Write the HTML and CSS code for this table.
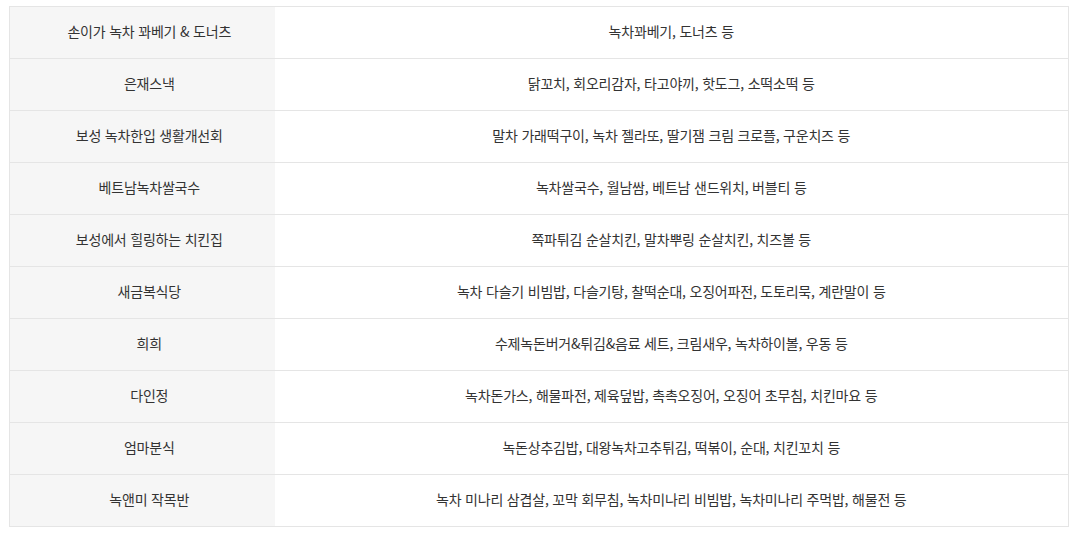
FILE: index.html
```html
<!DOCTYPE html>
<html lang="ko">
<head>
<meta charset="utf-8">
<link rel="stylesheet" href="styles.css">
</head>
<body>
<table class="menu-table">
  <colgroup><col class="col-name"><col class="col-menu"></colgroup>
  <tbody>
    <tr><th>손이가 녹차 꽈베기 &amp; 도너츠</th><td>녹차꽈베기, 도너츠 등</td></tr>
    <tr><th>은재스낵</th><td>닭꼬치, 회오리감자, 타고야끼, 핫도그, 소떡소떡 등</td></tr>
    <tr><th>보성 녹차한입 생활개선회</th><td>말차 가래떡구이, 녹차 젤라또, 딸기잼 크림 크로플, 구운치즈 등</td></tr>
    <tr><th>베트남녹차쌀국수</th><td>녹차쌀국수, 월남쌈, 베트남 샌드위치, 버블티 등</td></tr>
    <tr><th>보성에서 힐링하는 치킨집</th><td>쪽파튀김 순살치킨, 말차뿌링 순살치킨, 치즈볼 등</td></tr>
    <tr><th>새금복식당</th><td>녹차 다슬기 비빔밥, 다슬기탕, 찰떡순대, 오징어파전, 도토리묵, 계란말이 등</td></tr>
    <tr><th>희희</th><td>수제녹돈버거&amp;튀김&amp;음료 세트, 크림새우, 녹차하이볼, 우동 등</td></tr>
    <tr><th>다인정</th><td>녹차돈가스, 해물파전, 제육덮밥, 촉촉오징어, 오징어 초무침, 치킨마요 등</td></tr>
    <tr><th>엄마분식</th><td>녹돈상추김밥, 대왕녹차고추튀김, 떡볶이, 순대, 치킨꼬치 등</td></tr>
    <tr><th>녹앤미 작목반</th><td>녹차 미나리 삼겹살, 꼬막 회무침, 녹차미나리 비빔밥, 녹차미나리 주먹밥, 해물전 등</td></tr>
  </tbody>
</table>
</body>
</html>
```
FILE: styles.css
```css
html, body {
  background: #ffffff;
}
body {
  margin: 0;
  padding: 6px 0 0 9px;
  font-family: "Noto Sans CJK KR", "Noto Sans", sans-serif;
  font-size: 14px;
  color: #333333;
}
.menu-table {
  width: 1060px;
  border-collapse: collapse;
  border: 1px solid #e5e5e5;
  table-layout: fixed;
}
.col-name { width: 265px; }
.menu-table th,
.menu-table td {
  height: 48px;
  padding: 0 0 3px 0;
  border-top: 1px solid #e5e5e5;
  border-bottom: 1px solid #e5e5e5;
  text-align: center;
  vertical-align: middle;
  font-weight: 400;
  line-height: 20px;
  letter-spacing: -0.2px;
}
.menu-table th {
  background: #f6f6f6;
  padding-left: 14px;
}
```
